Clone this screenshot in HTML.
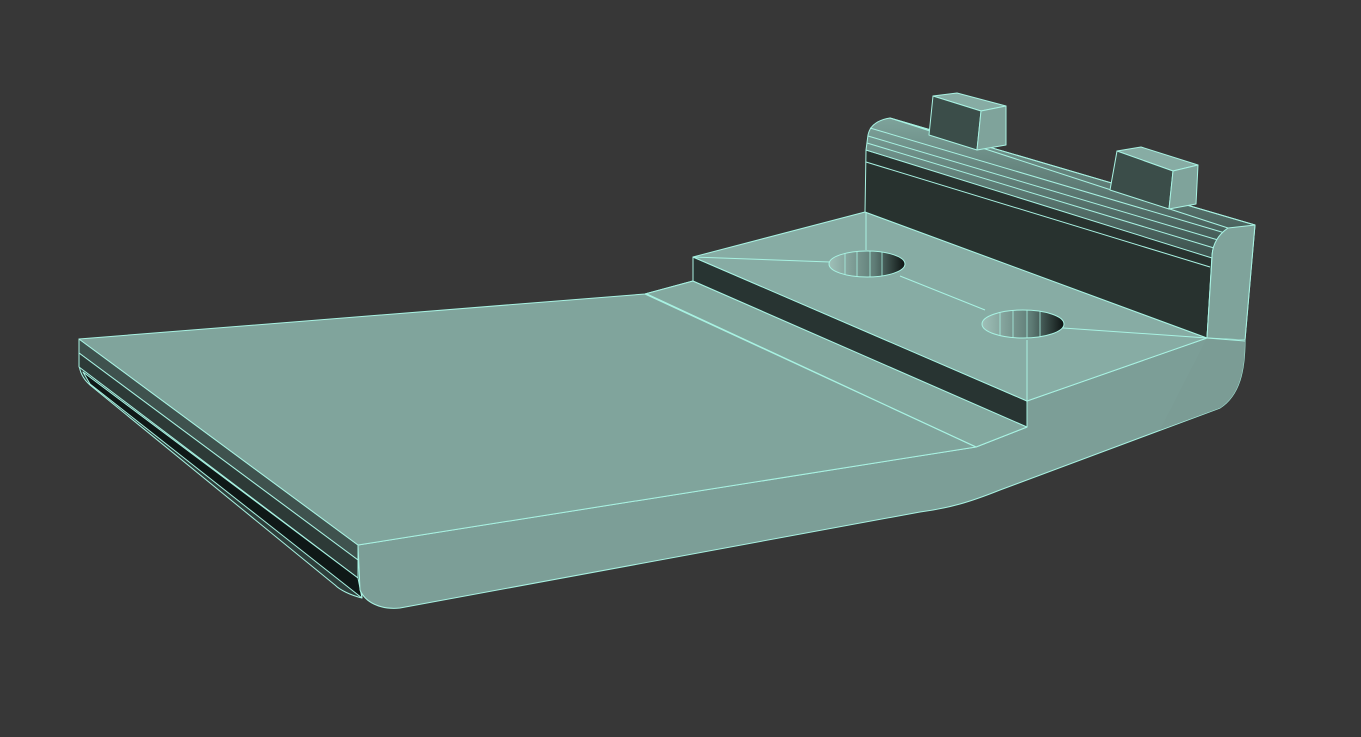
<!DOCTYPE html>
<html><head><style>html,body{margin:0;padding:0;background:#373737;width:1361px;height:737px;overflow:hidden}</style></head>
<body>
<svg width="1361" height="737" viewBox="0 0 1361 737" xmlns="http://www.w3.org/2000/svg">
<defs>
<linearGradient id="hole" x1="0" x2="1" y1="0" y2="0"><stop offset="0" stop-color="#9fc0b8"/><stop offset="0.6" stop-color="#5f7c76"/><stop offset="1" stop-color="#0d1312"/></linearGradient>
<linearGradient id="band" x1="0" x2="0" y1="0" y2="1"><stop offset="0" stop-color="#7ea39b"/><stop offset="1" stop-color="#3d524e"/></linearGradient>
</defs>
<g stroke="#a8f2e2" stroke-width="1" stroke-linejoin="round">
<path d="M79,339 L358,545 L362,598 C350,595 340,590 335,585 L90,385 C82,378 79,370 79,362 Z" fill="#2e3e3b"/>
<path d="M79,339 L358,545 L358,560 L79,353 Z" fill="#3f524e"/>
<path d="M79,353 L358,560 L358,578 L79,367 Z" fill="#2d3a37"/>
<path d="M83,372 L358,578 L362,598 L90,384 Z" fill="#0f1817"/>
<path d="M358,545 L976,447 L1027,427 L1027,401 L1207,338 L1245,340 C1245,370 1240,395 1220,408 L1000,490 C970,502 950,508 920,512 L400,608 C380,610 365,602 360,590 Z" fill="#7c9e97"/>
<path d="M79,339 L645,294 L693,281 L1027,427 L976,447 L358,545 Z" fill="#80a49c"/>
<path d="M645,294 L693,281 L1027,427 L976,447 Z" fill="#83a89f"/>
<line x1="647" y1="294" x2="976" y2="447"/>
<path d="M693,257 L1027,401 L1027,427 L693,281 Z" fill="#283432"/>
<path d="M693,257 L865,212 L1207,338 L1027,401 Z" fill="#87aca4"/>
<path d="M866,150 L1212,255 L1207,338 L865,212 Z" fill="#28322f"/>
<path d="M868,135 C870,125 878,120 890,118 L1255,225 L1228,232 C1215,238 1212,248 1212,258 L866,150 Z" fill="url(#band)"/>
<path d="M870,128 L1225,233" fill="none"/>
<path d="M868,136 L1218,240" fill="none"/>
<path d="M867,143 L1214,248" fill="none"/>
<path d="M866,162 L1210,267" fill="none"/>
<path d="M890,118 L1255,225 L1245,340 L1207,338 L1212,258 C1212,245 1218,235 1228,228 Z" fill="none"/>
<path d="M1228,228 L1255,225 L1245,340 L1207,338 L1212,258 C1212,245 1218,235 1228,228 Z" fill="#7fa39b"/>
<path d="M1207,338 L1245,340 C1245,370 1240,395 1220,408 L1160,430 Z" fill="#7b9c95" stroke="none"/>
<line x1="1207" y1="338" x2="1245" y2="341"/>
<line x1="693" y1="257" x2="830" y2="262"/>
<line x1="900" y1="276" x2="985" y2="310"/>
<line x1="1063" y1="328" x2="1207" y2="338"/>
<line x1="1027" y1="340" x2="1027" y2="401"/>
<line x1="866" y1="212" x2="866" y2="250"/>
<ellipse cx="867" cy="264" rx="38" ry="13" fill="url(#hole)"/>
<ellipse cx="1023" cy="324" rx="41" ry="14" fill="url(#hole)"/>
<g stroke-width="0.8"><line x1="845" y1="253" x2="845" y2="275"/><line x1="857" y1="252" x2="857" y2="277"/><line x1="870" y1="251" x2="870" y2="277"/><line x1="882" y1="252" x2="882" y2="276"/>
<line x1="1000" y1="312" x2="1000" y2="336"/><line x1="1013" y1="310" x2="1013" y2="338"/><line x1="1027" y1="310" x2="1027" y2="338"/><line x1="1040" y1="311" x2="1040" y2="337"/></g>
<path d="M933,96 L957,93 L1006,106 L981,111 Z" fill="#87aca4"/>
<path d="M933,96 L981,111 L977,150 L929,135 Z" fill="#3b4d49"/>
<path d="M981,111 L1006,106 L1006,145 L977,150 Z" fill="#7fa39b"/>
<path d="M1117,151 L1141,147 L1198,165 L1173,171 Z" fill="#87aca4"/>
<path d="M1117,151 L1173,171 L1169,209 L1110,190 Z" fill="#3b4d49"/>
<path d="M1173,171 L1198,165 L1196,204 L1169,209 Z" fill="#7fa39b"/>
</g>
</svg>
</body></html>
